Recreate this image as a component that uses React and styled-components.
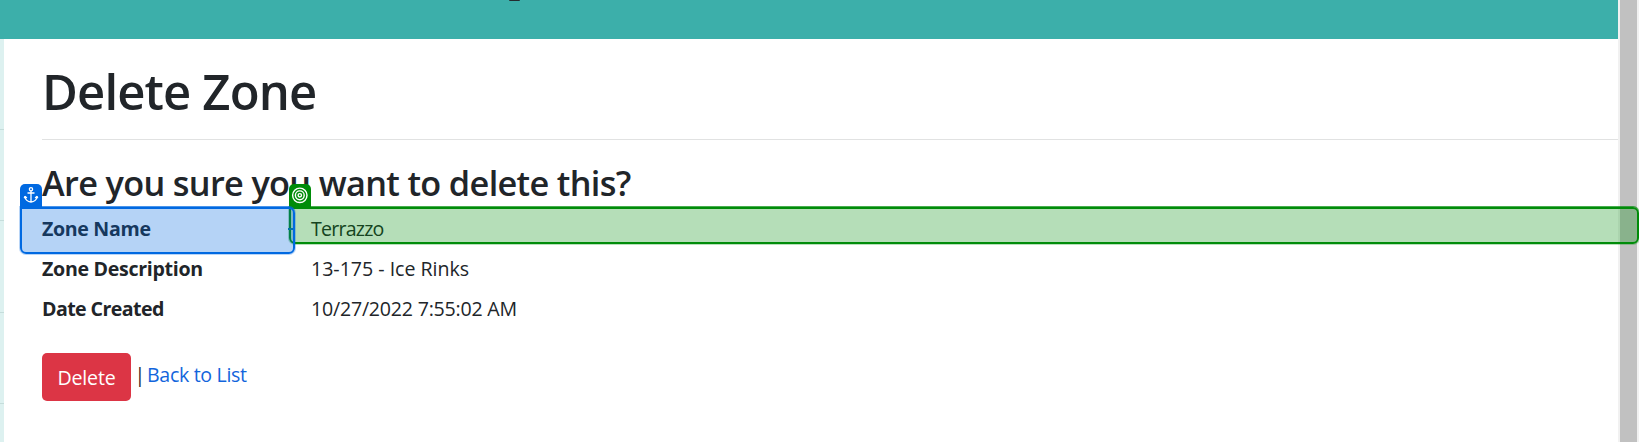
import React from "react";
import styled, { createGlobalStyle } from "styled-components";

const Global = createGlobalStyle`
  * { box-sizing: border-box; }
  body { margin: 0; overflow: hidden; background: #fff; color: #212529; font: 400 19.6px/30px "Open Sans", "Noto Sans", sans-serif; }
  h1, h3, dl, dd { margin: 0; }
`;
const Window = styled.div`display: flex; width: 1639px; height: 442px; position: relative; overflow: hidden;`;
const Page = styled.div`flex: 1; display: flex; flex-direction: column; min-width: 0;`;
const Header = styled.header`height: 39px; flex: none; background: #3cafaa; padding-left: 509px;`;
const Descender = styled.i`display: block; width: 11px; height: 1px; background: #242b2f; border-radius: 0 0 6px 6px;`;
const Body = styled.div`flex: 1; display: flex; min-height: 0;`;
const Sidebar = styled.aside`width: 4px; background: #ddf1f0; padding-top: 90px; display: flex; flex-direction: column; gap: 90.4px;`;
const Line = styled.div`height: 1px; flex: none; background: #c5dddb;`;
const Main = styled.main`flex: 1; padding: 22px 0 0 38px;`;
const Title = styled.h1`font-size: 49px; line-height: 60px; font-weight: 600; letter-spacing: -0.87px; white-space: nowrap;`;
const Rule = styled.div`height: 1px; background: #e1e2e2; margin: 18px 0 22px;`;
const Question = styled.h3`font-size: 34.3px; line-height: 42px; font-weight: 600; letter-spacing: -0.67px; white-space: nowrap;`;
const Details = styled.dl`display: grid; grid-template-columns: 269px 1fr; grid-auto-rows: 40px; padding-top: 10px;`;
const Term = styled.dt`font-weight: 700; letter-spacing: ${(p) => p.$track}px;`;
const Value = styled.dd`letter-spacing: ${(p) => p.$track}px;`;
const Actions = styled.div`display: flex; padding-top: 19px;`;
const Button = styled.button`
  width: 89px; height: 48px; border: 0; border-radius: 5px; background: #dc3545; color: #fff;
  font: inherit; letter-spacing: -0.2px; padding: 1px 0 0;
`;
const Pipe = styled.span`padding: 7px 0 0 1px; width: 17px; text-align: center;`;
const Link = styled.a`color: #1265dc; padding-top: 7px; margin-left: -1px; letter-spacing: -0.33px;`;
const Scrollbar = styled.div`width: 21px; background: #f1f1f1; padding: 0 2px; display: flex;`;
const Thumb = styled.div`flex: 1; background: #c1c1c1;`;
const Outline = styled.div`
  position: absolute; left: ${(p) => p.$x}px; top: 207px; width: ${(p) => p.$w}px; height: ${(p) => p.$h}px;
  background: rgba(${(p) => p.$c}, 0.29); border: 2px solid rgb(${(p) => p.$c}); border-radius: 0 6px 6px 6px;
  box-shadow: 0 0 0 1px rgba(${(p) => p.$c}, 0.28), 0 -1px 0 rgba(${(p) => p.$c}, 0.6);
`;
const Badge = styled.div`
  position: absolute; left: ${(p) => p.$x}px; top: 184px; width: 22px; height: 23px; border-radius: 5px 5px 0 0;
  background: rgb(${(p) => p.$c}); display: flex; justify-content: center;
  svg { display: block; width: 22px; height: 22px; flex: none; fill: none; stroke: #fff; }
`;
const Tick = styled.div`position: absolute; left: 288px; top: 228px; width: 6px; height: 2px; background: #08788f;`;

const blue = "0, 105, 225";
const green = "0, 140, 9";

export default function App() {
  return (
    <Window>
      <Global />
      <Page>
        <Header><Descender /></Header>
        <Body>
          <Sidebar><Line /><Line /><Line /><Line /></Sidebar>
          <Main>
            <Title>Delete Zone</Title>
            <Rule />
            <Question>Are you sure you want to delete this?</Question>
            <Details>
              <Term $track={-0.33}>Zone Name</Term><Value $track={-0.78}>Terrazzo</Value>
              <Term $track={-0.3}>Zone Description</Term><Value $track={-0.02}>13-175 - Ice Rinks</Value>
              <Term $track={-0.58}>Date Created</Term><Value $track={-0.22}>10/27/2022 7:55:02 AM</Value>
            </Details>
            <Actions><Button>Delete</Button><Pipe>|</Pipe><Link>Back to List</Link></Actions>
          </Main>
        </Body>
      </Page>
      <Scrollbar><Thumb /></Scrollbar>
      <Outline $x={289} $w={1350} $h={37} $c={green} />
      <Badge $x={288.6} $c={green}>
        <svg viewBox="0 0 22 22" strokeWidth="1.4">
          <circle cx="10.8" cy="11.3" r="7.2" /><circle cx="10.8" cy="11.3" r="4.4" /><circle cx="10.8" cy="11.3" r="1.7" />
        </svg>
      </Badge>
      <Tick />
      <Outline $x={20} $w={275} $h={47} $c={blue} />
      <Badge $x={19.5} $c={blue}>
        <svg viewBox="0 0 22 22" strokeWidth="1.3">
          <circle cx="11" cy="5.2" r="1.6" />
          <path d="M11 6.8V18M7.500 9h7M4.900 12.200l-.6 2M4.900 12.200l2 1.800M17.100 12.200l.6 2M17.100 12.200l-2 1.800M4.900 13c.6 3.200 3 4.700 6.100 5 3.100-.3 5.500-1.800 6.100-5" />
        </svg>
      </Badge>
    </Window>
  );
}
